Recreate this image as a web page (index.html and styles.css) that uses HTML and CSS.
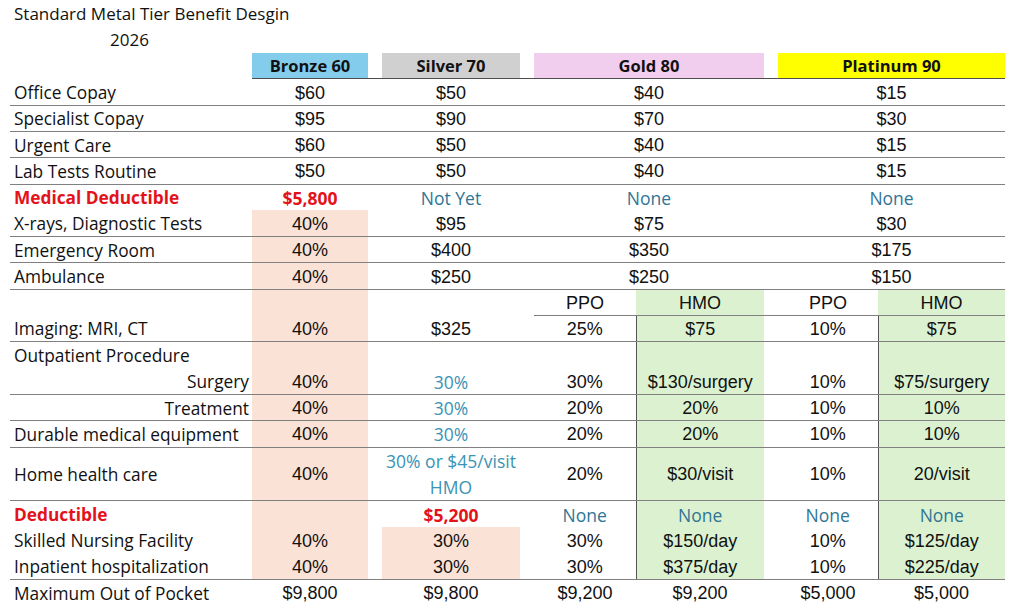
FILE: index.html
```html
<!DOCTYPE html>
<html>
<head>
<meta charset="utf-8">
<title>Standard Metal Tier Benefit Desgin</title>
<link rel="stylesheet" href="styles.css">
</head>
<body>
<table class="sheet">
<colgroup>
<col class="c-lbl"><col class="c-br"><col class="c-gap"><col class="c-si"><col class="c-gap"><col class="c-gp"><col class="c-gh"><col class="c-gap"><col class="c-pp"><col class="c-ph">
</colgroup>
<tr><td colspan="10" class="title">Standard Metal Tier Benefit Desgin</td></tr>
<tr><td colspan="10" class="title year">2026</td></tr>
<tr class="head">
<td></td><td class="h bronze">Bronze 60</td><td class="hl"></td><td class="h silver">Silver 70</td><td class="hl"></td><td colspan="2" class="h gold">Gold 80</td><td class="hl"></td><td colspan="2" class="h plat">Platinum 90</td>
</tr>
<tr class="ln"><td class="lbl">Office Copay</td><td class="v">$60</td><td></td><td class="v">$50</td><td></td><td colspan="2" class="v">$40</td><td></td><td colspan="2" class="v">$15</td></tr>
<tr class="ln"><td class="lbl">Specialist Copay</td><td class="v">$95</td><td></td><td class="v">$90</td><td></td><td colspan="2" class="v">$70</td><td></td><td colspan="2" class="v">$30</td></tr>
<tr class="ln"><td class="lbl">Urgent Care</td><td class="v">$60</td><td></td><td class="v">$50</td><td></td><td colspan="2" class="v">$40</td><td></td><td colspan="2" class="v">$15</td></tr>
<tr class="ln"><td class="lbl">Lab Tests Routine</td><td class="v">$50</td><td></td><td class="v">$50</td><td></td><td colspan="2" class="v">$40</td><td></td><td colspan="2" class="v">$15</td></tr>
<tr><td class="lbl red b">Medical Deductible</td><td class="a red b">$5,800</td><td></td><td class="a blue">Not Yet</td><td></td><td colspan="2" class="a blue">None</td><td></td><td colspan="2" class="a blue">None</td></tr>
<tr class="ln"><td class="lbl">X-rays, Diagnostic Tests</td><td class="v sal">40%</td><td></td><td class="v">$95</td><td></td><td colspan="2" class="v">$75</td><td></td><td colspan="2" class="v">$30</td></tr>
<tr class="ln"><td class="lbl">Emergency Room</td><td class="v sal">40%</td><td></td><td class="v">$400</td><td></td><td colspan="2" class="v">$350</td><td></td><td colspan="2" class="v">$175</td></tr>
<tr class="ln"><td class="lbl">Ambulance</td><td class="v sal">40%</td><td></td><td class="v">$250</td><td></td><td colspan="2" class="v">$250</td><td></td><td colspan="2" class="v">$150</td></tr>
<tr><td></td><td class="sal"></td><td></td><td></td><td></td><td class="v bb">PPO</td><td class="v grn bb">HMO</td><td class="bb"></td><td class="v bb">PPO</td><td class="v grn bb">HMO</td></tr>
<tr class="ln"><td class="lbl">Imaging: MRI, CT</td><td class="v sal">40%</td><td></td><td class="v">$325</td><td></td><td class="v">25%</td><td class="v grn vl">$75</td><td></td><td class="v">10%</td><td class="v grn vl">$75</td></tr>
<tr><td class="lbl">Outpatient Procedure</td><td class="sal"></td><td></td><td></td><td></td><td></td><td class="grn vl"></td><td></td><td></td><td class="grn vl"></td></tr>
<tr class="ln"><td class="lbl r">Surgery</td><td class="v sal">40%</td><td></td><td class="a blue2">30%</td><td></td><td class="v">30%</td><td class="v grn vl">$130/surgery</td><td></td><td class="v">10%</td><td class="v grn vl">$75/surgery</td></tr>
<tr class="ln"><td class="lbl r">Treatment</td><td class="v sal">40%</td><td></td><td class="a blue2">30%</td><td></td><td class="v">20%</td><td class="v grn vl">20%</td><td></td><td class="v">10%</td><td class="v grn vl">10%</td></tr>
<tr class="ln"><td class="lbl">Durable medical equipment</td><td class="v sal">40%</td><td></td><td class="a blue2">30%</td><td></td><td class="v">20%</td><td class="v grn vl">20%</td><td></td><td class="v">10%</td><td class="v grn vl">10%</td></tr>
<tr class="ln tall"><td class="lbl">Home health care</td><td class="v sal">40%</td><td></td><td class="a blue2 wrap">30% or $45/visit HMO</td><td></td><td class="v">20%</td><td class="v grn vl">$30/visit</td><td></td><td class="v">10%</td><td class="v grn vl">20/visit</td></tr>
<tr><td class="lbl red b">Deductible</td><td class="sal"></td><td></td><td class="a red b">$5,200</td><td></td><td class="a blue">None</td><td class="a blue grn vl">None</td><td></td><td class="a blue">None</td><td class="a blue grn vl">None</td></tr>
<tr><td class="lbl">Skilled Nursing Facility</td><td class="v sal">40%</td><td></td><td class="v sal">30%</td><td></td><td class="v">30%</td><td class="v grn vl">$150/day</td><td></td><td class="v">10%</td><td class="v grn vl">$125/day</td></tr>
<tr class="ln"><td class="lbl">Inpatient hospitalization</td><td class="v sal">40%</td><td></td><td class="v sal">30%</td><td></td><td class="v">30%</td><td class="v grn vl">$375/day</td><td></td><td class="v">10%</td><td class="v grn vl">$225/day</td></tr>
<tr><td class="lbl">Maximum Out of Pocket</td><td class="v">$9,800</td><td></td><td class="v">$9,800</td><td></td><td class="v">$9,200</td><td class="v">$9,200</td><td></td><td class="v">$5,000</td><td class="v">$5,000</td></tr>
</table>
</body>
</html>
```

FILE: styles.css
```css
html, body {
  margin: 0;
  padding: 0;
  background: #ffffff;
}
body {
  padding: 0 0 0 10px;
  font-family: "Open Sans", "Noto Sans", sans-serif;
  color: #111111;
}
.sheet {
  border-collapse: collapse;
  table-layout: fixed;
  width: 995px;
}
.c-lbl { width: 242px; }
.c-br { width: 116px; }
.c-gap { width: 14px; }
.c-si { width: 138px; }
.c-gp { width: 102px; }
.c-gh { width: 128px; }
.c-pp { width: 100px; }
.c-ph { width: 127px; }

.sheet td {
  height: 26.3px;
  padding: 0;
  white-space: nowrap;
  overflow: visible;
  vertical-align: middle;
  box-sizing: border-box;
}
.sheet tr.tall td { height: 52.6px; }

.title {
  font-size: 17px;
  padding-left: 4px !important;
  text-align: left;
}
.year { padding-left: 100px !important; }

.h {
  font-weight: 700;
  font-size: 16.5px;
  text-align: center;
}
.head td + td { border-bottom: 1px solid #4d4d4d; }
.bronze { background: #83cceb; }
.silver { background: #d0d0d0; }
.gold { background: #f1cdee; }
.plat { background: #ffff00; }

.lbl {
  font-size: 17.3px;
  text-align: left;
  padding-left: 4px !important;
  padding-top: 1px !important;
}
.lbl.r {
  text-align: right;
  padding-right: 3px !important;
}
.v {
  font-family: "Liberation Sans", Arial, sans-serif;
  font-size: 18px;
  text-align: center;
  padding-top: 2px !important;
}
.a {
  font-size: 17.5px;
  text-align: center;
  padding-top: 1px !important;
}
.b { font-weight: 700; }
.red { color: #e3121b; }
.blue { color: #2f7596; }
.blue2 { color: #3a93b5; }
.wrap {
  white-space: normal !important;
  line-height: 26.3px;
  padding-top: 0 !important;
}

.sal { background: #fbe2d6; }
.grn { background: #dbf1d0; }

.ln td { border-bottom: 1.5px solid #808080; }
.bb { border-bottom: 1.5px solid #808080; }
.vl { border-left: 1px solid #555555; }
```
